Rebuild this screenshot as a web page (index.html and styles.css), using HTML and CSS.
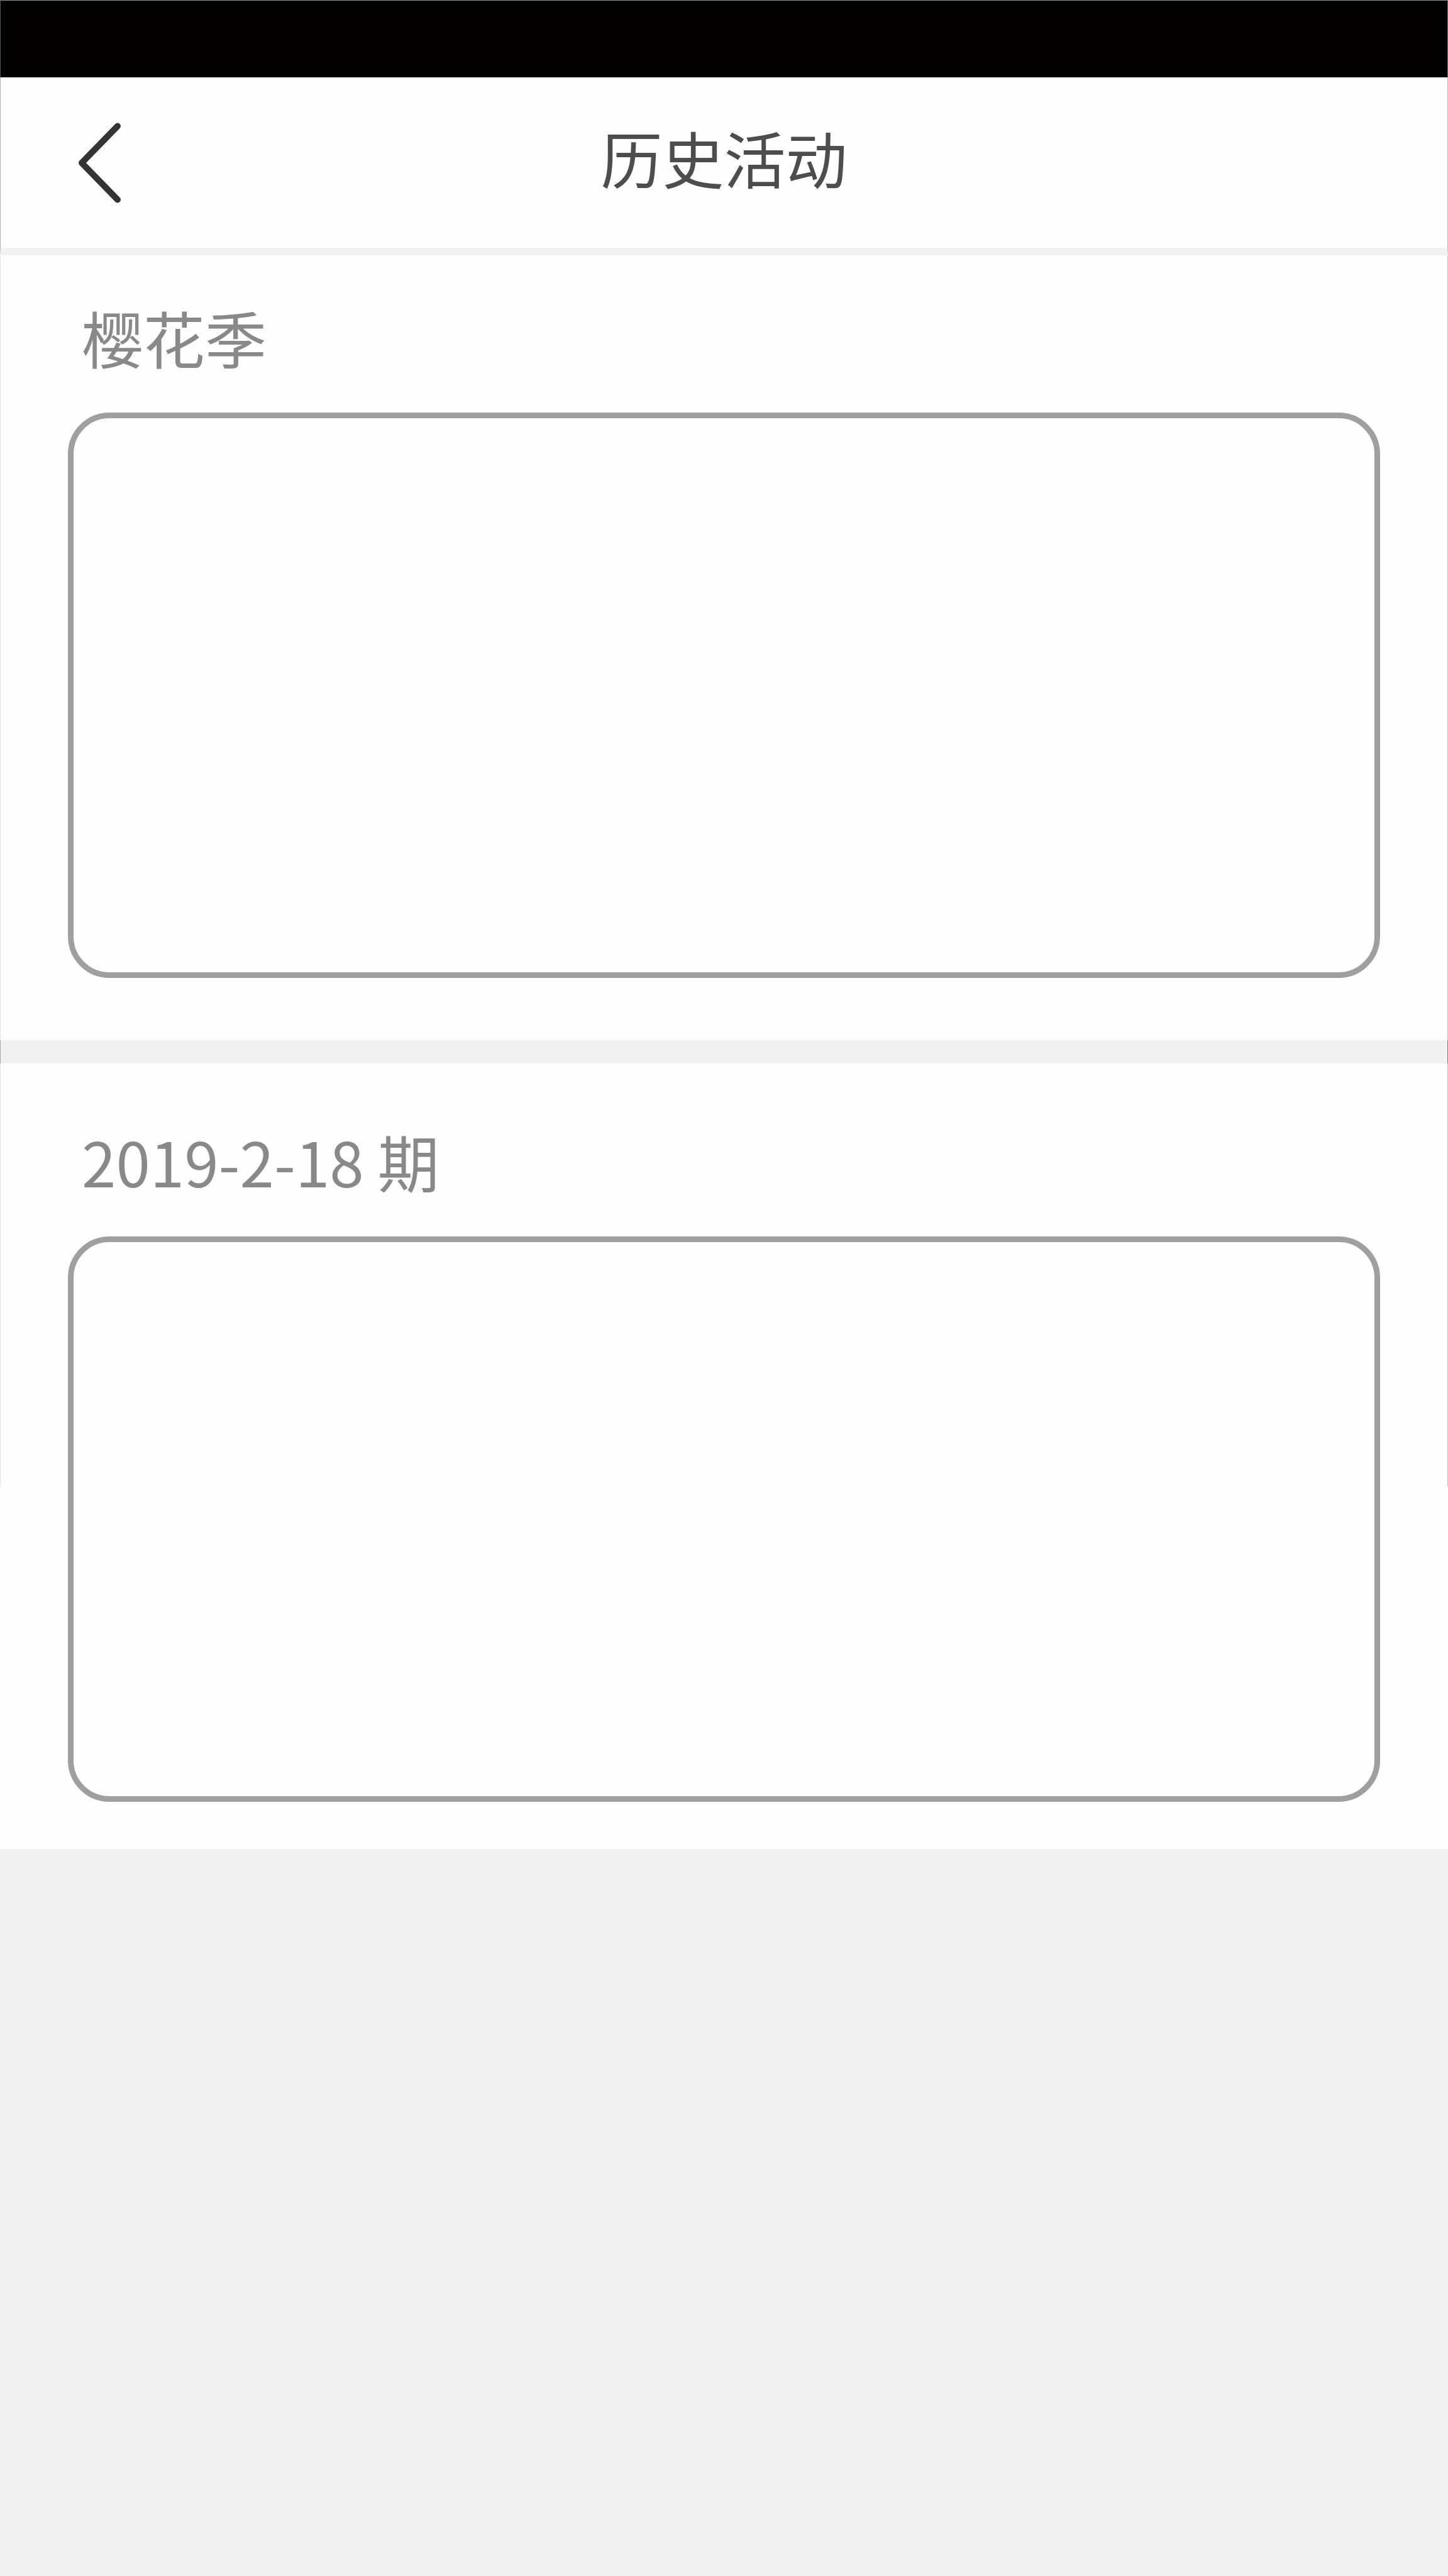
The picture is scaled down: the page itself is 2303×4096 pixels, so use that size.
FILE: index.html
```html
<!DOCTYPE html>
<html lang="zh-CN">
<head>
<meta charset="utf-8">
<meta name="viewport" content="width=device-width, initial-scale=1">
<title>历史活动</title>
<link rel="stylesheet" href="styles.css">
</head>
<body>
<div class="status-bar"></div>
<header class="header">
  <button class="back" type="button" aria-label="返回">
    <svg class="back-icon" viewBox="0 0 68 128" aria-hidden="true"><path d="M63 5.500L6 64l57 58.500"/></svg>
  </button>
  <h1 class="title">历史活动</h1>
</header>
<main class="list">
  <section class="activity">
    <h2 class="label">樱花季</h2>
    <div class="card"></div>
  </section>
  <section class="activity activity-last">
    <h2 class="label">2019-2-18 期</h2>
    <div class="card"></div>
  </section>
</main>
</body>
</html>
```
FILE: styles.css
```css
* {
  box-sizing: border-box;
}

body {
  margin: 0;
  min-height: 100vh;
  background: #f1f1f1;
  font-family: "Noto Sans CJK SC", sans-serif;
}

.status-bar {
  height: 123px;
  background: #030000;
  border: 1px solid #555;
  border-top-color: #8e908e;
  border-right-color: #777;
  border-bottom: 0;
}

.header {
  display: grid;
  grid-template-columns: 1fr auto 1fr;
  align-items: start;
  height: 283px;
  padding: 66px 123px 0;
  background: #fefefe;
  border: 1px solid #b4b4b4;
  border-top: 0;
  border-bottom: 12px solid #f1f1f1;
}

.back {
  justify-self: start;
  display: flex;
  padding: 6px 0 0;
  border: 0;
  background: none;
}

.back-icon {
  width: 68px;
  height: 128px;
  fill: none;
  stroke: #333;
  stroke-width: 10;
  stroke-linecap: round;
  stroke-linejoin: round;
}

.title,
.label {
  margin: 0;
  font-size: 98px;
  line-height: 120px;
  font-weight: 400;
}

.title {
  color: #4d4d4d;
}

/* Hairlines run down both edges of the list and show darker in the gap. */
.list {
  display: flex;
  flex-direction: column;
  gap: 37px;
  background:
    linear-gradient(#aaa, #aaa) left / 1px 100% no-repeat,
    linear-gradient(#777, #777) right / 1px 100% no-repeat;
}

.activity {
  display: flex;
  flex-direction: column;
  gap: 61px;
  padding: 69px 108px 99px;
  background:
    linear-gradient(#e8e8e8, #e8e8e8) left top / 1px 100% no-repeat,
    linear-gradient(#c0c0c0, #c0c0c0) right top / 1px 100% no-repeat,
    #fefefe;
}

.activity-last {
  padding-top: 94px;
  padding-bottom: 75px;
  background-size: 1px 673px, 1px 673px, auto;
}

.label {
  padding-left: 22px;
  color: #898989;
}

.card {
  height: 899px;
  border: 9px solid #9f9f9f;
  border-radius: 66px;
}
```
